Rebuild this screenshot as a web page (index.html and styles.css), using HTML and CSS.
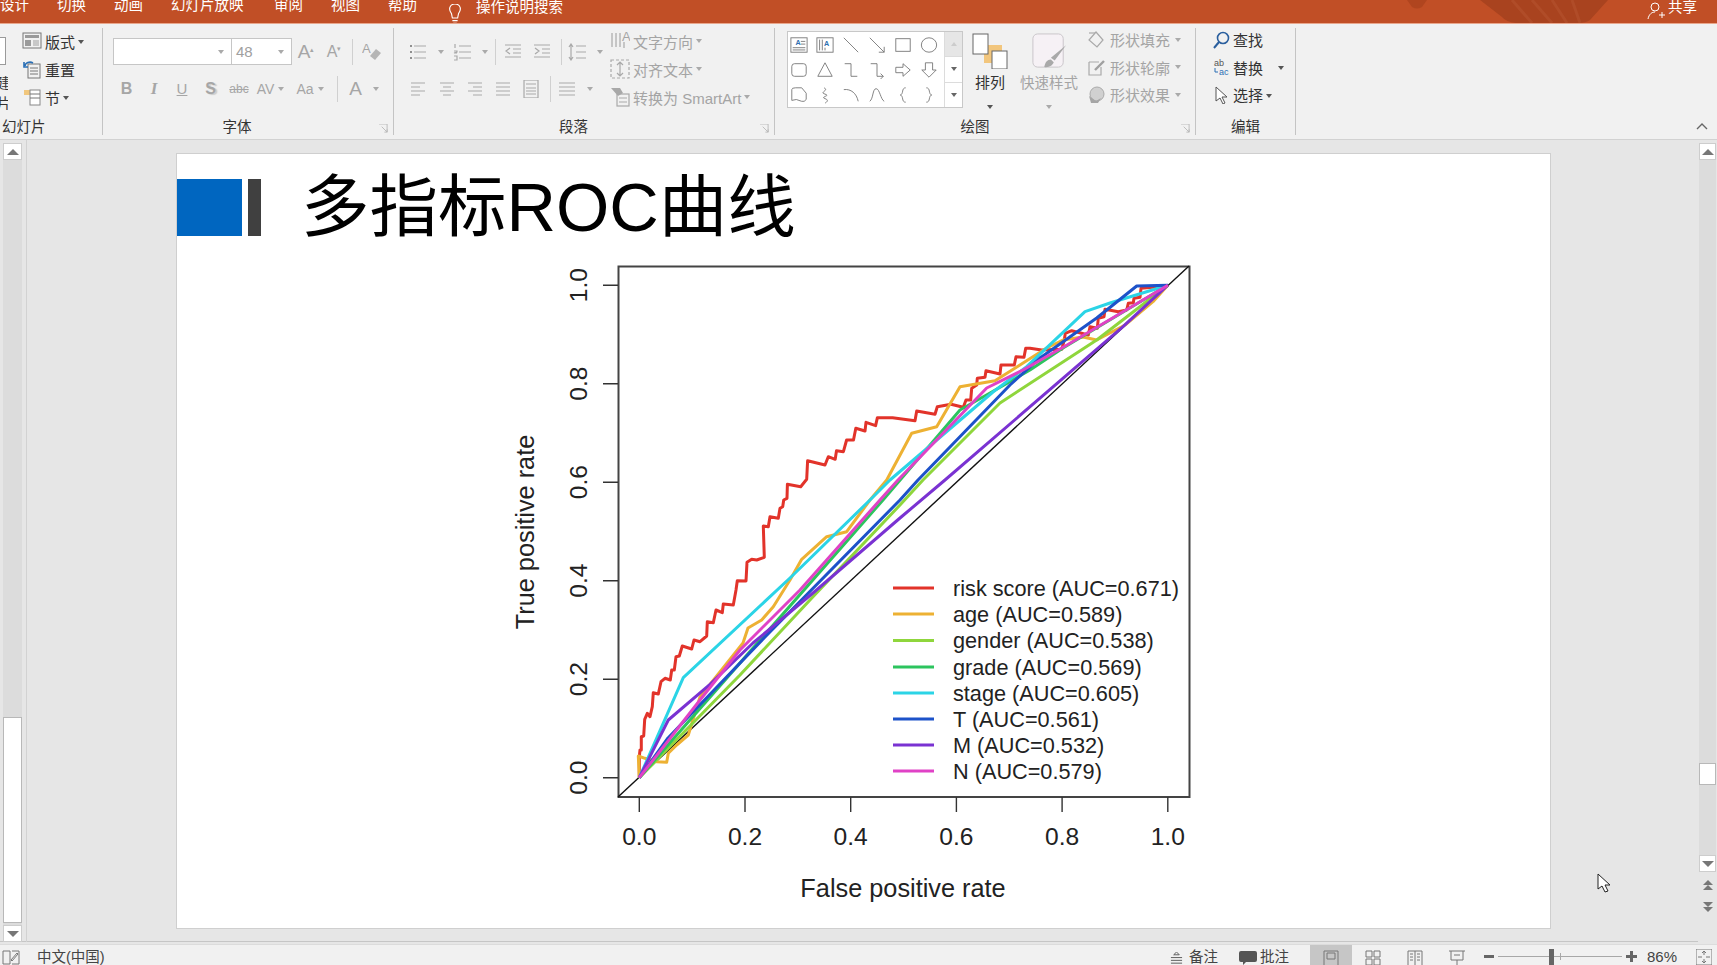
FILE: index.html
```html
<!DOCTYPE html>
<html lang="zh-CN">
<head>
<meta charset="utf-8">
<title>多指标ROC曲线 - PowerPoint</title>
<link rel="stylesheet" href="styles.css">
</head>
<body>
<div class="app">
  <header class="topbar">
    <svg class="deco" viewBox="0 0 320 23"><path d="M0 0h20l-5 7q-5 3-10 0z" fill="#b0451f"/><path d="M73 0h128l-18 20q-4 3-12 3h-62q-10-1-14-6z" fill="#a9431f"/><path d="M105 0l20 23M125 0l20 23M145 0l15 23M165 0l8 23" stroke="#b04c28" stroke-width="3"/></svg>
    <nav class="tabs">
      <span class="tab t1">设计</span><span class="tab">切换</span><span class="tab">动画</span><span class="tab wide">幻灯片放映</span><span class="tab">审阅</span><span class="tab">视图</span><span class="tab">帮助</span>
      <svg class="bulb" viewBox="0 0 16 24"><path d="M4 11c-4-5-2-11 4-11s8 6 4 11l-1 5H5zM5 19h6M6 22h4" fill="none" stroke="#fff" stroke-width="1.3"/></svg>
      <span class="search">操作说明搜索</span>
    </nav>
    <div class="share">
      <svg viewBox="0 0 18 18" class="share-ico"><circle cx="8" cy="5" r="4" fill="none" stroke="#fff"/><path d="M1 17c1-5 4-7 7-7M12 13h6M15 10v6" fill="none" stroke="#fff"/></svg>
      <span>共享</span>
    </div>
  </header>

  <section class="ribbon">
    <div class="group g-slide">
      <div class="body">
        <div class="cut">
          <div class="cutbox"></div>
          <div class="cuttext">建</div>
          <div class="cuttext">片▾</div>
        </div>
        <div class="stack s1">
          <div class="srow"><svg class="i20" viewBox="0 0 20 20"><rect x="1" y="2" width="18" height="15" class="st"/><rect x="3" y="4" width="14" height="3" class="fg"/><rect x="3" y="9" width="6" height="6" class="fg"/><rect x="11" y="9" width="6" height="6" class="fl"/></svg><span>版式</span><i class="caret dk"></i></div>
          <div class="srow"><svg class="i20" viewBox="0 0 20 20"><rect x="6" y="5" width="12" height="14" class="st"/><path d="M8 9h8M8 12h8M8 15h8" class="st"/><path d="M3 7a5 4 0 0 1 8-3M2 3v5h4" fill="none" stroke="#2a6fb5" stroke-width="1.6"/></svg><span>重置</span></div>
          <div class="srow"><svg class="i20" viewBox="0 0 20 20"><path d="M2 3h7v5H2z" fill="#f1c77d"/><rect x="8" y="3" width="10" height="15" fill="#fff" stroke="#888"/><path d="M8 7h10M8 11h10" class="st"/></svg><span>节</span><i class="caret dk"></i></div>
        </div>
      </div>
      <div class="label l-slide">幻灯片</div>
    </div>

    <div class="group g-font">
      <div class="body rows r-font">
        <div class="fr1">
          <div class="combo"><i class="caret"></i></div>
          <div class="combo num"><span>48</span><i class="caret"></i></div>
          <div class="tool"><span class="gt big">A<sup>▴</sup></span></div>
          <div class="tool"><span class="gt mid">A<sup>▾</sup></span></div>
          <div class="tool"><b class="vr"></b></div>
          <div class="tool"><svg class="i20" viewBox="0 0 20 20"><text x="0" y="11" class="svgt">A</text><path d="M8 14l6-7 5 4-6 7z" fill="#b5b5b5"/></svg></div>
        </div>
        <div class="fr2">
          <div class="tool"><b class="gt bold">B</b></div>
          <div class="tool"><i class="gt ital">I</i></div>
          <div class="tool"><u class="gt">U</u></div>
          <div class="tool"><span class="gt bold shadow">S</span></div>
          <div class="tool"><s class="gt sm">abc</s></div>
          <div class="tool"><span class="gt av">AV</span><i class="caret"></i></div>
          <div class="tool"><span class="gt aa">Aa</span><i class="caret"></i></div>
          <div class="tool"><b class="vr"></b></div>
          <div class="tool"><span class="gt big2">A</span><i class="caret sp"></i></div>
        </div>
      </div>
      <div class="label l-font">字体<svg class="launch" viewBox="0 0 10 10"><path d="M0 0h9v9M3 3l6 6M6 9h3V6" fill="none" stroke="#b8b8b8"/></svg></div>
    </div>

    <div class="group g-para">
      <div class="body para">
        <div class="rows r-para">
          <div class="pr1">
            <div class="tool"><svg class="i18" viewBox="0 0 18 18"><path d="M5 3h12M5 9h12M5 15h12" class="sg"/><path d="M1 3h2M1 9h2M1 15h2" class="sg2"/></svg><i class="caret sp"></i></div>
            <div class="tool"><svg class="i18" viewBox="0 0 18 18"><path d="M6 3h12M6 9h12M6 15h12" class="sg"/><path d="M2 1v4M1 8h3v1l-3 1h3M1 13h3v4H1" class="sg"/></svg><i class="caret sp"></i></div>
            <div class="tool"><b class="vr"></b></div>
            <div class="tool"><svg class="i18" viewBox="0 0 18 18"><path d="M1 2h16M9 6h8M9 10h8M1 14h16M6 5L2 8l4 3" class="sg"/></svg></div>
            <div class="tool"><svg class="i18" viewBox="0 0 18 18"><path d="M1 2h16M9 6h8M9 10h8M1 14h16M2 5l4 3-4 3" class="sg"/></svg></div>
            <div class="tool"><b class="vr"></b></div>
            <div class="tool"><svg class="i18" viewBox="0 0 18 18"><path d="M8 3h10M8 9h10M8 15h10M3 1v16M1 4l2-3 2 3M1 14l2 3 2-3" class="sg"/></svg><i class="caret sp"></i></div>
          </div>
          <div class="pr2">
            <div class="tool"><svg class="i18" viewBox="0 0 18 18"><path d="M2 3h14M2 7h9M2 11h14M2 15h9" class="sg"/></svg></div>
            <div class="tool"><svg class="i18" viewBox="0 0 18 18"><path d="M2 3h14M5 7h8M2 11h14M5 15h8" class="sg"/></svg></div>
            <div class="tool"><svg class="i18" viewBox="0 0 18 18"><path d="M2 3h14M7 7h9M2 11h14M7 15h9" class="sg"/></svg></div>
            <div class="tool"><svg class="i18" viewBox="0 0 18 18"><path d="M2 3h14M2 7h14M2 11h14M2 15h14" class="sg"/></svg></div>
            <div class="tool"><svg class="i18" viewBox="0 0 18 18"><rect x="2" y="0" width="14" height="18" class="sg"/><path d="M4 4h10M4 8h10M4 11h10M4 14h10" class="sg"/></svg></div>
            <div class="tool"><b class="vr"></b></div>
            <div class="tool"><svg class="i18" viewBox="0 0 18 18"><path d="M1 3h16M1 7h16M1 11h16M1 15h16" class="sg"/></svg><i class="caret sp"></i></div>
          </div>
        </div>
        <div class="stack s3 off">
          <div class="srow"><svg class="i20" viewBox="0 0 20 20"><path d="M2 2v14M6 2v14M10 2v14" class="sg"/><text x="12" y="10" class="svgt">A</text><path d="M14 11v6" class="sg"/></svg><span>文字方向</span><i class="caret"></i></div>
          <div class="srow"><svg class="i20" viewBox="0 0 20 20"><path d="M1 1h18v18H1z" class="sg" stroke-dasharray="3 2"/><path d="M10 3v14M7 6l3-3 3 3M7 14l3 3 3-3" class="sg"/></svg><span>对齐文本</span><i class="caret"></i></div>
          <div class="srow"><svg class="i20" viewBox="0 0 20 20"><path d="M1 1h9l3 5-5 3z" fill="#a8a8a8"/><rect x="7" y="7" width="12" height="12" class="sg"/><path d="M9 11h8M9 15h8" class="sg"/></svg><span>转换为 SmartArt</span><i class="caret"></i></div>
        </div>
      </div>
      <div class="label l-para">段落<svg class="launch" viewBox="0 0 10 10"><path d="M0 0h9v9M3 3l6 6M6 9h3V6" fill="none" stroke="#b8b8b8"/></svg></div>
    </div>

    <div class="group g-draw">
      <div class="body draw">
        <div class="gallery">
          <div class="shapes">
            <svg viewBox="0 0 20 20"><rect x="1" y="2" width="18" height="16" class="st"/><text x="6" y="10" class="svgb">A</text><path d="M3 13h14M3 15.5h14M12 6h5M12 9h5" stroke="#777" fill="none"/></svg>
            <svg viewBox="0 0 20 20"><rect x="1" y="2" width="18" height="16" class="st"/><text x="9" y="11" class="svgb">A</text><path d="M4 4v12M7 4v12M10 13v3" stroke="#777" fill="none"/></svg>
            <svg viewBox="0 0 20 20"><path d="M2 2l16 16" class="st"/></svg>
            <svg viewBox="0 0 20 20"><path d="M2 2l16 16M18 12v6h-6" class="st"/></svg>
            <svg viewBox="0 0 20 20"><rect x="2" y="3" width="16" height="14" class="st"/></svg>
            <svg viewBox="0 0 20 20"><ellipse cx="10" cy="10" rx="8.5" ry="8" class="st"/></svg>
            <svg viewBox="0 0 20 20"><rect x="2" y="3" width="16" height="14" rx="3" class="st"/></svg>
            <svg viewBox="0 0 20 20"><path d="M10 2l8 15H2z" class="st"/></svg>
            <svg viewBox="0 0 20 20"><path d="M3 3h7v14h7" class="st"/></svg>
            <svg viewBox="0 0 20 20"><path d="M3 3h7v14h7M14 14l3 3-3 3" class="st"/></svg>
            <svg viewBox="0 0 20 20"><path d="M2 7h8V3l8 7-8 7v-4H2z" class="st"/></svg>
            <svg viewBox="0 0 20 20"><path d="M6 2h8v8h4l-8 8-8-8h4z" class="st"/></svg>
            <svg viewBox="0 0 20 20"><path d="M2 4q0-2 4-2h7l5 6v7q-2 3-5 2l-6-2-5 1z" class="st"/></svg>
            <svg viewBox="0 0 20 20"><path d="M9 2c6 3-6 5 1 7s-6 3 0 5 0 5 0 5" class="st"/></svg>
            <svg viewBox="0 0 20 20"><path d="M2 4c8-1 14 4 16 13" class="st"/></svg>
            <svg viewBox="0 0 20 20"><path d="M2 17c4-3 3-14 7-14s5 12 9 14" class="st"/></svg>
            <svg viewBox="0 0 20 20"><path d="M13 2c-5 0-2 7-6 8 4 1 1 8 6 8" class="st"/></svg>
            <svg viewBox="0 0 20 20"><path d="M7 2c5 0 2 7 6 8-4 1-1 8-6 8" class="st"/></svg>
          </div>
          <div class="gscroll"><div class="gs off2"><i class="tri up"></i></div><div class="gs"><i class="tri"></i></div><div class="gs more"><i class="tri"></i></div></div>
        </div>
        <div class="bigbtn">
          <svg class="i36" viewBox="0 0 36 36"><rect x="12" y="12" width="18" height="18" fill="#f2c67d"/><rect x="1" y="1" width="15" height="20" fill="#fff" stroke="#666"/><rect x="20" y="18" width="15" height="18" fill="#fff" stroke="#666"/></svg>
          <span class="bt">排列</span><i class="caret dk"></i>
        </div>
        <div class="bigbtn off">
          <svg class="i36" viewBox="0 0 36 38"><rect x="1" y="1" width="32" height="35" rx="5" fill="#f6f1f5" stroke="#c8c4c8"/><path d="M36 13L24 29l-4-3zM20 28c-4 0-6 3-7 8 5 1 9-2 10-5z" fill="#a9a9a9"/></svg>
          <span class="bt">快速样式</span><i class="caret"></i>
        </div>
        <div class="stack s4 off">
          <div class="srow"><svg class="i18" viewBox="0 0 18 18"><path d="M9 1l7 8-6 7-8-7z" class="sg"/><path d="M2 2h6" class="sg"/></svg><span>形状填充</span><i class="caret"></i></div>
          <div class="srow"><svg class="i18" viewBox="0 0 18 18"><path d="M2 4h10M2 4v13h12V9" class="sg"/><path d="M8 12l9-9" stroke="#a0a0a0" stroke-width="2.4"/></svg><span>形状轮廓</span><i class="caret"></i></div>
          <div class="srow"><svg class="i18" viewBox="0 0 18 18"><circle cx="10" cy="8" r="7" fill="#d0d0d0" stroke="#aaa"/><path d="M2 10l7 5 5-3-3 5H4z" fill="#a5a5a5"/></svg><span>形状效果</span><i class="caret"></i></div>
        </div>
      </div>
      <div class="label l-draw">绘图<svg class="launch" viewBox="0 0 10 10"><path d="M0 0h9v9M3 3l6 6M6 9h3V6" fill="none" stroke="#b8b8b8"/></svg></div>
    </div>

    <div class="group g-edit">
      <div class="body">
        <div class="stack s5">
          <div class="srow"><svg class="i18" viewBox="0 0 18 18"><circle cx="11" cy="7" r="5.5" fill="none" stroke="#2a5f9e" stroke-width="1.6"/><path d="M7 11l-5 6" stroke="#2a5f9e" stroke-width="2"/></svg><span>查找</span></div>
          <div class="srow"><svg class="i18" viewBox="0 0 18 18"><text x="2" y="8" class="svgs">ab</text><text x="7" y="17" class="svgs blue">ac</text><path d="M3 10v4h3" fill="none" stroke="#2a6fb5"/></svg><span>替换</span><i class="caret dk sp2"></i></div>
          <div class="srow"><svg class="i18" viewBox="0 0 18 18"><path d="M4 1v14l4-3 3 6 2-1-3-6h5z" fill="#fff" stroke="#555"/></svg><span>选择</span><i class="caret dk"></i></div>
        </div>
      </div>
      <div class="label l-edit">编辑</div>
    </div>
    <div class="rest"><svg class="chev" viewBox="0 0 12 8"><path d="M1 7l5-5 5 5" fill="none" stroke="#666" stroke-width="1.4"/></svg></div>
  </section>

  <main class="work">
    <aside class="sbar left">
      <div class="sbtn"><i class="tri up"></i></div>
      <div class="track"><div class="thumb"></div></div>
      <div class="sbtn"><i class="tri"></i></div>
    </aside>
    <div class="canvas">
      <article class="slide">
        <div class="head">
          <div class="blk-blue"></div>
          <div class="blk-dark"></div>
          <h1>多指标ROC曲线</h1>
        </div>
        <svg class="chart" viewBox="500 250 720 660">
          <g fill="none" stroke="#333">
            <path d="M618.5 266.5H1189.5V797H618.5Z" stroke-width="2" stroke="#444"/>
            <path d="M618 797L1189 266" stroke="#111" stroke-width="1.4"/>
            <path d="M639.3 797v15M745 797v15M850.7 797v15M956.4 797v15M1062.1 797v15M1167.8 797v15" stroke-width="1.4"/>
            <path d="M603 777.7h15M603 679.2h15M603 580.7h15M603 482.2h15M603 383.7h15M603 285.2h15" stroke-width="1.4"/>
          </g>
          <g fill="none" stroke-width="3" stroke-linejoin="round">
            <polyline stroke="#e2332a" points="639.3,777.7 639.3,756.7 640,750 641.3,750 641.3,736.7 643.7,736 644.7,719.3 647.3,713.3 650,716.7 652.3,706.7 653.3,692.7 658.3,694 661,681.7 665,678.3 670.3,680 671.7,670 674.3,670 676,656.7 679.3,656 682.3,646 691.7,649 694,640 700,641.7 706.7,636 707.3,621.7 713.3,622.7 716,610 722.3,612.7 723.3,604 733.3,605 736,590 737.3,580.7 746,581 747,562.3 751.7,559.3 756.7,560 764.3,557.3 763.3,526 768.3,526.7 770,516.7 778.3,518.3 780,508.3 782.7,506.7 783.7,500 787,498.3 787.4,484.3 800.7,486.7 806.7,479.3 807.6,460.7 825,465 828.3,456.7 835.2,459.3 836.5,450.7 843.4,451.7 846.6,440 853.5,440 855.8,428.3 865,431 866,422.3 875.6,425.7 877.4,417.7 892.6,417.7 915,420.7 916.7,411 935,414.3 937.3,406.7 951,404.3 963.3,407.3 966,400 970.7,400 971.7,388.3 976.7,385 977.3,378.3 985,377.3 986,370.7 1000,374 1001,365 1014.3,365 1016,356.7 1024,357.3 1025.7,348.3 1030,348.3 1041.7,350 1061.7,349.3 1064.3,340 1065.3,333.3 1071.7,330.7 1088.3,335 1090,326.7 1097.3,328.3 1098.3,318.3 1104,316.7 1105,309.3 1118.3,311.7 1126.7,310 1128.3,303.3 1133.3,302.7 1134,298.3 1140,297.3 1141,288.3 1166.7,286 1167.8,285.2"/>
            <polyline stroke="#edb133" points="639.3,777.7 638.3,756 645,758.3 656.7,761.7 666.7,762.3 668.3,753.3 676.7,745 688.3,735 700,697 743,643 748,628 761.7,620 773.3,606.7 790,580 801.7,559.3 826.7,536.7 846.7,531.7 870,500 886.7,480 911.7,433.3 936.7,426.7 960,386.7 995,380.7 1046.7,348 1063,340 1083,337 1096.7,340 1125,325 1153,301.7 1167.8,285.2"/>
            <polyline stroke="#8fd63c" points="639.3,777.7 740,675 813,596.7 900,505 923,480 1000,403 1096.7,340 1167.8,285.2"/>
            <polyline stroke="#2cc45e" points="639.3,777.7 883,500 960,410 990,393 1030,370 1063,348 1167.8,285.2"/>
            <polyline stroke="#2bd4e6" points="639.3,777.7 683.3,677.7 790,578 870,500 890,480 993,392 1026.7,366.7 1085,311.7 1110,303 1167.8,285.2"/>
            <polyline stroke="#1d52c9" points="639.3,777.7 668,738 765,637 900,500 918,480 1010,385 1040,358 1096.7,318 1136.7,286 1167.8,285.2"/>
            <polyline stroke="#7a32d2" points="639.3,777.7 668.3,720 710,684.3 753,643 813,593 900,518 945,480 1123,326.7 1167.8,285.2"/>
            <polyline stroke="#e042c6" points="639.3,777.7 700,700 740,650 800,590 880,500 898,480 986.7,388 1023,370 1067,345 1167.8,285.2"/>
          </g>
          <g stroke-width="3">
            <path d="M893 588h41" stroke="#e2332a"/>
            <path d="M893 614h41" stroke="#edb133"/>
            <path d="M893 640.5h41" stroke="#8fd63c"/>
            <path d="M893 667h41" stroke="#2cc45e"/>
            <path d="M893 693h41" stroke="#2bd4e6"/>
            <path d="M893 719h41" stroke="#1d52c9"/>
            <path d="M893 745h41" stroke="#7a32d2"/>
            <path d="M893 771h41" stroke="#e042c6"/>
          </g>
          <g class="leg">
            <text x="953" y="596">risk score (AUC=0.671)</text>
            <text x="953" y="622">age (AUC=0.589)</text>
            <text x="953" y="648">gender (AUC=0.538)</text>
            <text x="953" y="675">grade (AUC=0.569)</text>
            <text x="953" y="701">stage (AUC=0.605)</text>
            <text x="953" y="727">T (AUC=0.561)</text>
            <text x="953" y="753">M (AUC=0.532)</text>
            <text x="953" y="779">N (AUC=0.579)</text>
          </g>
          <g class="axis">
            <text x="639.3" y="845">0.0</text><text x="745" y="845">0.2</text><text x="850.7" y="845">0.4</text><text x="956.4" y="845">0.6</text><text x="1062.1" y="845">0.8</text><text x="1167.8" y="845">1.0</text>
            <text x="903" y="897" class="wide">False positive rate</text>
            <text transform="translate(587 777.7) rotate(-90)">0.0</text>
            <text transform="translate(587 679.2) rotate(-90)">0.2</text>
            <text transform="translate(587 580.7) rotate(-90)">0.4</text>
            <text transform="translate(587 482.2) rotate(-90)">0.6</text>
            <text transform="translate(587 383.7) rotate(-90)">0.8</text>
            <text transform="translate(587 285.2) rotate(-90)">1.0</text>
            <text transform="translate(534 532) rotate(-90)" class="wide">True positive rate</text>
          </g>
        </svg>
      </article>
    </div>
    <aside class="sbar right">
      <div class="sbtn"><i class="tri up"></i></div>
      <div class="track tr2"><div class="thumb th2"></div></div>
      <div class="sbtn"><i class="tri"></i></div>
      <div class="pager"><i class="tri up"></i><i class="tri up ov"></i><i class="tri gap"></i><i class="tri ov2"></i></div>
    </aside>
    <svg class="cursor" viewBox="0 0 14 20"><path d="M1 1v15l4-3 3 6 3-1-3-6h5z" fill="#fff" stroke="#222"/></svg>
  </main>

  <footer class="status">
    <svg class="st-note" viewBox="0 0 18 16"><path d="M1 2h7v13H1zM10 2h7v13h-7M9 11l6-7 1 1-6 7z" class="stg"/></svg>
    <span class="lang">中文(中国)</span>
    <span class="grow"></span>
    <svg class="i14" viewBox="0 0 14 14"><path d="M7 0l3 3H4zM1 6h12M1 9h12M1 12h12" fill="none" stroke="#555"/></svg>
    <span class="st1">备注</span>
    <svg class="cmt" viewBox="0 0 18 16"><path d="M2 1h14q2 0 2 2v7q0 2-2 2H7l-3 3v-3H2q-2 0-2-2V3q0-2 2-2z" fill="#555"/></svg>
    <span class="st2">批注</span>
    <div class="view on"><svg class="i16" viewBox="0 0 16 16"><path d="M1 1h14v15H1zM4 3h8v6H4z" class="stg"/></svg></div>
    <div class="view"><svg class="i16" viewBox="0 0 16 16"><path d="M1 1h6v6H1zM9 1h6v6H9zM1 9h6v6H1zM9 9h6v6H9z" class="stg"/></svg></div>
    <div class="view"><svg class="i16" viewBox="0 0 16 16"><path d="M1 1h14v15H1zM8 1v15M3 4h3M3 7h3M3 10h3M10 4h3M10 7h3M10 10h3" class="stg"/></svg></div>
    <div class="view"><svg class="i16" viewBox="0 0 16 16"><path d="M0 1h16M2 1v9h12V1M8 10v6M5 5h6" class="stg"/></svg></div>
    <div class="zoom">
      <b class="zm"></b>
      <div class="slider"><b class="knob"></b><b class="tick"></b></div>
      <b class="zp"></b>
      <span class="pct">86%</span>
      <svg class="i16 fit" viewBox="0 0 16 16"><path d="M0 0h16v16H0zM8 2v4M6 4l2-2 2 2M8 14v-4M6 12l2 2 2-2M2 8h4M14 8h-4" class="stg"/></svg>
    </div>
  </footer>
</div>
</body>
</html>
```
FILE: styles.css
```css
* { box-sizing: border-box; }
html, body { margin: 0; height: 100%; overflow: hidden; }
body { font-family: "Liberation Sans", "Noto Sans CJK SC", sans-serif; color: #333; background: #e6e6e6; }
.app { width: 1717px; height: 965px; display: flex; flex-direction: column; position: relative; overflow: hidden; }

/* title bar */
.topbar { height: 24px; flex: none; background: #c14f26; border-bottom: 1px solid #e9a78c; display: flex; align-items: flex-end; justify-content: space-between; overflow: hidden; position: relative; color: #fff; font-size: 14.5px; }
.deco { position: absolute; left: 1407px; top: 0; width: 320px; height: 23px; }
.tabs { display: flex; align-items: center; height: 20px; margin-bottom: 8px; position: relative; }
.tab { width: 57px; flex: none; white-space: nowrap; line-height: 20px; }
.tab.wide { width: 103px; }
.bulb { width: 14px; height: 21px; margin-left: 3px; margin-top: 18px; flex: none; }
.search { margin-left: 14px; }
.share { display: flex; align-items: center; height: 20px; margin-bottom: 8px; margin-right: 20px; position: relative; gap: 3px; }
.share-ico { width: 18px; height: 18px; margin-top: 12px; }

/* ribbon */
.ribbon { height: 116px; flex: none; background: #f1f1f1; border-bottom: 1px solid #d2d2d2; display: flex; color: #333; font-size: 15px; }
.group { flex: none; display: flex; flex-direction: column; position: relative; height: 107px; margin-top: 4px; border-right: 1px solid #c4c4c4; }
.body { height: 90px; display: flex; flex: none; }
.label { height: 17px; line-height: 19px; font-size: 14.5px; text-align: center; position: relative; color: #333; white-space: nowrap; }
.launch { position: absolute; right: 5px; top: 6px; width: 9px; height: 9px; }
.g-slide { width: 103px; }
.g-font { width: 291px; }
.g-para { width: 381px; }
.g-draw { width: 421px; }
.g-edit { width: 100px; }
.rest { flex: 1; display: flex; justify-content: flex-end; align-items: flex-end; padding: 0 9px 9px 0; }
.chev { width: 12px; height: 8px; }
.l-slide { text-align: left; padding-left: 2px; }
.l-font { padding-right: 22px; }
.l-para { padding-right: 21px; }
.l-draw { padding-right: 20px; }
.l-edit { padding-right: 0; }

.cut { width: 8px; flex: none; display: flex; flex-direction: column; align-items: flex-end; overflow: hidden; padding-top: 9px; font-size: 14px; }
.cutbox { width: 6px; height: 28px; flex: none; background: #fff; border: 1px solid #9a9a9a; border-left: 0; margin-right: 2px; }
.cuttext { width: 20px; flex: none; line-height: 20px; white-space: nowrap; margin-right: -9px; margin-top: 0; }
.cutbox + .cuttext { margin-top: 8px; }
.stack { display: flex; flex-direction: column; }
.srow { height: 28px; flex: none; display: flex; align-items: center; white-space: nowrap; gap: 3px; }
.s1 { margin-left: 14px; margin-top: -1px; }
.s3 { margin-left: 4px; margin-top: -1px; }
.s4 { margin-left: 5px; margin-top: -2px; }
.s4 .srow { gap: 5px; height: 27.5px; }
.s5 { margin-left: 16px; margin-top: -2px; }
.s5 .srow { height: 27.5px; }
.off { color: #a4a4a4; }
.i20 { width: 20px; height: 20px; flex: none; }
.i18 { width: 18px; height: 18px; flex: none; }
.i36 { width: 36px; height: 36px; flex: none; }
.i14 { width: 13px; height: 13px; flex: none; }
.i16 { width: 16px; height: 16px; flex: none; }
.st { fill: none; stroke: #777; stroke-width: 1; }
.fg { fill: #9a9a9a; }
.fl { fill: #c8c8c8; }
.sg { fill: none; stroke: #a9a9a9; stroke-width: 1.2; }
.sg2 { fill: none; stroke: #8f8f8f; stroke-width: 2; }
.svgt { font: 13px "Liberation Sans", sans-serif; fill: #a5a5a5; }
.svgb { font: bold 8px "Liberation Sans", sans-serif; fill: #2f6fb0; }
.svgs { font: 9px "Liberation Sans", sans-serif; fill: #555; }
.svgs.blue { fill: #2a6fb5; }
.caret { width: 0; height: 0; flex: none; border: 3px solid transparent; border-top: 4px solid #aaa; border-bottom: 0; }
.caret.dk { border-top-color: #555; }
.caret.sp { margin-left: 7px; }
.caret.sp2 { margin-left: 12px; }
.s1 .srow span + .caret, .s5 .srow span + .caret { margin-top: 2px; }

/* font group */
.rows { display: flex; flex-direction: column; }
.r-font { padding: 10px 0 0 10px; }
.fr1 { display: grid; grid-template-columns: 119px 60px 28px 28px 8px 32px; height: 27px; align-items: center; }
.fr2 { display: grid; grid-template-columns: 27px 28px 28px 29px 28px 35px 44px 10px 44px; height: 28px; margin-top: 10px; align-items: center; }
.combo { height: 27px; background: #fff; border: 1px solid #c6c6c6; display: flex; align-items: center; justify-content: flex-end; padding-right: 7px; }
.combo.num { border-left: 0; justify-content: space-between; padding-left: 4px; color: #a0a0a0; font-size: 15px; }
.tool { display: flex; align-items: center; justify-content: center; height: 100%; min-width: 0; gap: 4px; }
.gt { color: #a6a6a6; font-size: 15px; line-height: 20px; white-space: nowrap; }
.gt sup { font-size: 7px; vertical-align: 6px; line-height: 0; }
.gt.big { font-size: 19px; }
.gt.mid { font-size: 16px; }
.gt.big2 { font-size: 19px; }
.gt.bold { font-weight: 700; font-size: 16px; }
.gt.ital { font-family: "Liberation Serif", serif; font-size: 17px; font-style: italic; font-weight: 700; }
.gt.sm { font-size: 12px; }
.gt.av { font-size: 14px; }
.gt.aa { font-size: 14px; }
.shadow { text-shadow: 2px 1px 1px #ccc; }
.vr { display: block; width: 1px; height: 26px; background: #d0d0d0; }

/* paragraph */
.para { padding-left: 10px; }
.r-para { width: 202px; flex: none; }
.pr1 { display: grid; grid-template-columns: 44px 44px 6px 30px 28px 10px 38px; height: 28px; margin-top: 10px; align-items: center; }
.pr2 { display: grid; grid-template-columns: 28px 29px 28px 28px 28px 10px 40px; height: 28px; margin-top: 9px; align-items: center; }

/* drawing */
.draw { padding-left: 12px; }
.gallery { width: 176px; height: 77px; margin-top: 3px; background: #fff; border: 1px solid #c8c8c8; display: flex; flex: none; }
.shapes { width: 158px; padding-right: 2px; margin-left: -2px; display: grid; grid-template-columns: repeat(6, 26px); grid-auto-rows: 25px; flex: none; }
.shapes svg { width: 18px; height: 18px; align-self: center; justify-self: center; }
.gscroll { flex: 1; display: flex; flex-direction: column; border-left: 1px solid #dcdcdc; }
.gs { flex: 1; display: flex; align-items: center; justify-content: center; border-bottom: 1px solid #dcdcdc; }
.gs.off2 { background: #e6e6e6; }
.gs.more { border-bottom: 0; }
.gs .tri { border-top-color: #666; border-width: 3px; border-top-width: 4px; }
.gs.off2 .tri { border-top: 0; border-bottom: 4px solid #ccc; }
.tri { display: block; width: 0; height: 0; border: 6px solid transparent; border-top: 6px solid #777; border-bottom: 0; }
.tri.up { border-top: 0; border-bottom: 6px solid #777; }
.bigbtn { display: flex; flex-direction: column; align-items: center; padding-top: 5px; flex: none; width: 64px; }
.bigbtn .bt { line-height: 20px; margin-top: 4px; white-space: nowrap; color: inherit; }
.bigbtn .caret { margin-top: 12px; }
.bigbtn.off { width: 66px; font-size: 14.5px; }
.bigbtn:not(.off) { width: 52px; margin-left: 1px; }

/* work area */
.work { height: 802px; flex: none; display: grid; grid-template-columns: 27px 1fr 19px; border-bottom: 1px solid #c6c6c6; position: relative; background: #e6e6e6; }
.sbar { display: flex; flex-direction: column; padding-top: 3px; }
.sbar.left { border-right: 1px solid #d2d2d2; padding-left: 3px; padding-right: 4px; }
.sbar.right { padding-right: 1px; padding-left: 1px; background: #e6e6e6; }
.sbtn { height: 17px; flex: none; background: #fff; border: 1px solid #cdcdcd; display: flex; align-items: center; justify-content: center; }
.track { flex: 1; background: #dcdcdc; display: flex; flex-direction: column; justify-content: flex-end; padding-bottom: 2px; }
.thumb { height: 206px; background: #fff; border: 1px solid #b8b8b8; }
.tr2 { flex: none; height: 695px; justify-content: flex-start; padding: 0; }
.th2 { height: 22px; margin-top: 603px; }
.pager { flex: 1; display: flex; flex-direction: column; align-items: center; padding-top: 8px; }
.pager .tri { border-left-width: 5px; border-right-width: 5px; border-top-width: 5px; }
.pager .tri.up { border-bottom-width: 5px; }
.pager .gap { margin-top: 12px; }
.canvas { padding: 14px 148px 14px 150px; min-width: 0; }
.slide { background: #fff; height: 774px; width: 1373px; box-shadow: 0 0 0 1px #cfcfcf; overflow: hidden; }
.head { display: flex; height: 57px; position: relative; top: 25px; }
.blk-blue { width: 65px; background: #0066c0; flex: none; }
.blk-dark { width: 13px; background: #404040; margin-left: 6px; flex: none; }
h1 { margin: 0 0 0 40px; font-weight: 400; font-size: 68.5px; line-height: 57px; color: #000; white-space: nowrap; }
.chart { display: block; width: 720px; height: 660px; margin: 39px 0 0 323px; }
.leg text { font-size: 21.7px; fill: #222; }
.axis text { font-size: 24.6px; fill: #222; text-anchor: middle; }
.axis text.wide { font-size: 25.3px; }
.chart text { font-family: "Liberation Sans", sans-serif; }
.cursor { position: absolute; left: 1597px; top: 733px; width: 14px; height: 20px; }

/* status bar */
.status { flex: 1; margin-top: 2px; background: #f1f1f1; border-top: 1px solid #dcdcdc; display: flex; align-items: flex-start; padding: 3px 5px 0 2px; font-size: 14.5px; line-height: 18px; color: #444; overflow: hidden; }
.st-note { width: 18px; height: 16px; flex: none; margin-top: 1px; }
.stg { fill: none; stroke: #777; stroke-width: 1; }
.lang { margin-left: 17px; }
.grow { flex: 1; }
.status > .i14 { margin-top: 4px; }
.st1 { margin-left: 6px; }
.cmt { width: 18px; height: 16px; margin: 2px 0 0 21px; flex: none; }
.st2 { margin-left: 3px; }
.view { width: 42px; height: 22px; margin-top: -3px; display: flex; align-items: center; justify-content: center; flex: none; padding-top: 3px; }
.view.on { background: #c6c6c6; margin-left: 21px; }
.zoom { display: flex; align-items: flex-start; flex: none; }
.zm { width: 10px; height: 3px; background: #666; margin: 7px 4px 0 6px; flex: none; }
.slider { width: 124px; height: 1px; background: #a8a8a8; margin-top: 8px; position: relative; flex: none; }
.knob { position: absolute; left: 51px; top: -7px; width: 5px; height: 18px; background: #666; }
.tick { position: absolute; left: 62px; top: -3px; width: 1px; height: 7px; background: #a8a8a8; }
.zp { width: 11px; height: 11px; margin: 3px 0 0 4px; flex: none; background: linear-gradient(#666, #666) center / 11px 3px no-repeat, linear-gradient(#666, #666) center / 3px 11px no-repeat; }
.pct { margin-left: 10px; font-size: 15px; }
.fit { margin: 1px 0 0 19px; }
```
